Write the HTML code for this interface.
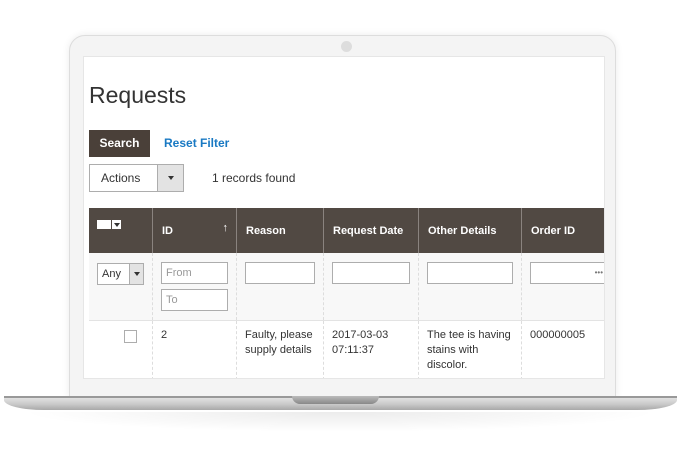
<!DOCTYPE html>
<html><head><meta charset="utf-8"><style>
*{box-sizing:border-box;margin:0;padding:0}
body{width:680px;height:450px;background:#fff;position:relative;overflow:hidden;font-family:"Liberation Sans",sans-serif;color:#333}
.lid{position:absolute;left:69px;top:35px;width:547px;height:364px;background:#f4f4f4;border:1px solid #ddd;border-radius:16px 16px 0 0;box-shadow:0 0 8px rgba(0,0,0,.08)}
.cam{position:absolute;left:341px;top:41px;width:11px;height:11px;border-radius:50%;background:#ddd}
.screen{position:absolute;left:83px;top:56px;width:522px;height:323px;background:#fff;overflow:hidden;border:1px solid #e6e6e6}
.base{position:absolute;left:4px;top:396px;width:673px;height:14px;background:linear-gradient(#e8e8e8,#c9c9c9 60%,#a8a8a8);border-radius:0 0 40px 40px/0 0 10px 10px}
.base:after{content:"";position:absolute;left:0;right:0;top:0;height:2px;background:#999}
.notch{position:absolute;left:292px;top:396px;width:87px;height:8px;background:linear-gradient(#bbb,#888);border-radius:0 0 8px 8px}
.shadow{position:absolute;left:20px;top:412px;width:640px;height:20px;background:radial-gradient(ellipse at top,rgba(0,0,0,.08),rgba(0,0,0,0) 70%)}
h1{position:absolute;left:5px;top:25px;font-weight:normal;font-size:23px;color:#333}
.btn{position:absolute;left:5px;top:73px;width:61px;height:27px;background:#4a4039;color:#fff;font-size:12px;font-weight:bold;text-align:center;line-height:27px}
.reset{position:absolute;left:80px;top:79px;color:#1979c3;font-size:12px;font-weight:bold}
.act{position:absolute;left:5px;top:107px;width:95px;height:28px;border:1px solid #adadad;background:#fff;font-size:12px;line-height:26px;padding-left:11px}
.act i{position:absolute;right:0;top:0;width:26px;height:26px;background:#e3e3e3;border-left:1px solid #adadad}
.tri{display:block;width:0;height:0;border-left:3px solid transparent;border-right:3px solid transparent;border-top:4px solid #333;position:absolute;left:50%;top:50%;transform:translate(-50%,-50%)}
.rec{position:absolute;left:128px;top:114px;font-size:12px}
table{position:absolute;left:5px;top:151px;border-collapse:collapse;font-size:11px;table-layout:fixed}
th{background:#514943;color:#fff;height:45px;text-align:left;padding-left:9px;font-size:11px;border-left:1px solid #8a837f;position:relative}
th:first-child{border-left:none}
td{vertical-align:top;border-left:1px dashed #ddd;padding:9px 8px}
td:first-child{border-left:none}
.fr td{background:#f8f8f8;height:66px;padding:9px 8px;border-bottom:1px solid #e3e3e3}
.dr td{height:58px;line-height:15px;padding:7px 8px;border-bottom:1px solid #e3e3e3}
.in{border:1px solid #adadad;height:22px;background:#fff;font-size:11px;color:#999;line-height:20px;padding-left:4px}
</style></head><body>
<div class="shadow"></div>
<div class="lid"></div>
<div class="cam"></div>
<div class="screen">
<h1>Requests</h1>
<div class="btn">Search</div>
<div class="reset">Reset Filter</div>
<div class="act">Actions<i><b class="tri"></b></i></div>
<div class="rec">1 records found</div>
<table>
<colgroup><col style="width:64px"><col style="width:85px"><col style="width:87px"><col style="width:94px"><col style="width:103px"><col style="width:90px"></colgroup>
<tr><th style="padding-left:8px"><span style="display:inline-block;width:14px;height:9px;background:#fff;vertical-align:middle;margin-top:-12px"></span><span style="display:inline-block;width:9px;height:9px;background:#fff;margin-left:1px;position:relative;vertical-align:middle;margin-top:-12px"><b class="tri" style="border-top-color:#333"></b></span></th>
<th>ID<span style="position:absolute;right:8px;top:14px;font-weight:normal">↑</span></th><th>Reason</th><th>Request Date</th><th>Other Details</th><th>Order ID</th></tr>
<tr class="fr"><td style="padding:10px 8px"><div class="in" style="width:47px;color:#333;position:relative">Any<i style="position:absolute;right:0;top:0;width:14px;height:20px;background:#e3e3e3;border-left:1px solid #adadad"><b class="tri"></b></i></div></td>
<td><div class="in" style="width:67px">From</div><div class="in" style="width:67px;margin-top:5px">To</div></td>
<td><div class="in" style="width:70px"></div></td>
<td><div class="in" style="width:78px"></div></td>
<td><div class="in" style="width:86px"></div></td>
<td><div class="in" style="width:80px;color:#777;text-align:right;font-size:8px;padding-right:6px">•••</div></td></tr>
<tr class="dr"><td><span style="display:inline-block;width:13px;height:13px;border:1px solid #adadad;margin-left:27px;margin-top:2px"></span></td>
<td>2</td><td>Faulty, please supply details</td><td>2017-03-03 07:11:37</td><td>The tee is having stains with discolor.</td><td>000000005</td></tr>
</table>
</div>
<div class="base"></div>
<div class="notch"></div>
</body></html>
